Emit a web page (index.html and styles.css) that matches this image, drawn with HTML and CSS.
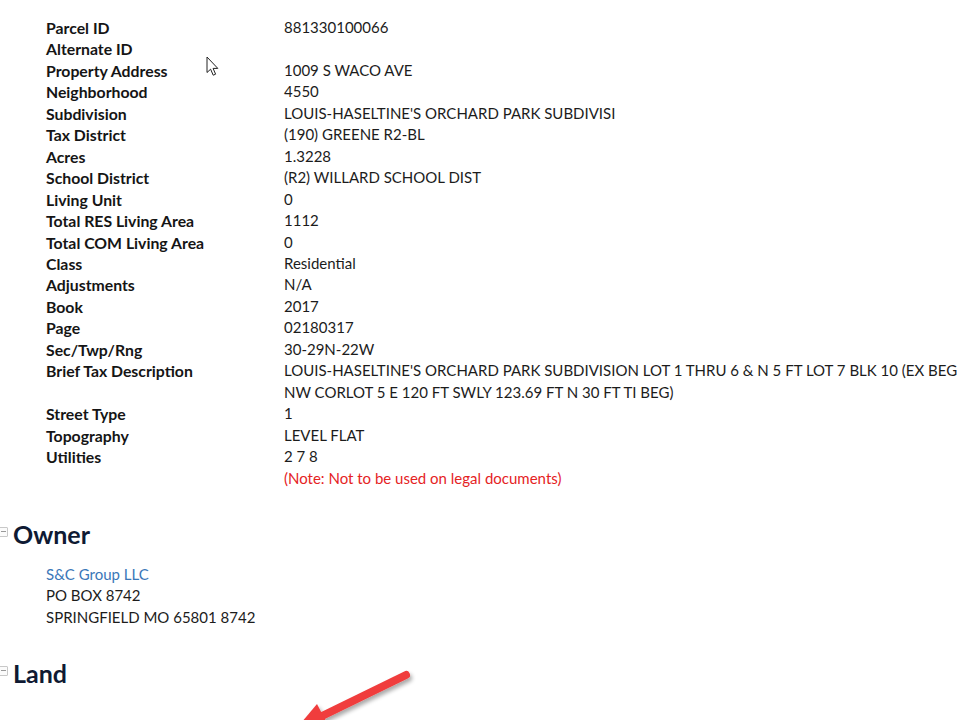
FILE: index.html
```html
<!DOCTYPE html>
<html lang="en">
<head>
<meta charset="utf-8">
<title>Parcel 881330100066</title>
<link rel="stylesheet" href="styles.css">
</head>
<body>
<div class="page">
  <section class="section section-first">
    <h2 class="heading"><span class="toggle"></span>Property</h2>
    <dl class="grid">
      <dt>Parcel ID</dt><dd>881330100066</dd>
      <dt>Alternate ID</dt><dd></dd>
      <dt>Property Address</dt><dd>1009 S WACO AVE</dd>
      <dt>Neighborhood</dt><dd>4550</dd>
      <dt>Subdivision</dt><dd>LOUIS-HASELTINE'S ORCHARD PARK SUBDIVISI</dd>
      <dt>Tax District</dt><dd>(190) GREENE R2-BL</dd>
      <dt>Acres</dt><dd>1.3228</dd>
      <dt>School District</dt><dd>(R2) WILLARD SCHOOL DIST</dd>
      <dt>Living Unit</dt><dd>0</dd>
      <dt>Total RES Living Area</dt><dd>1112</dd>
      <dt>Total COM Living Area</dt><dd>0</dd>
      <dt>Class</dt><dd>Residential</dd>
      <dt>Adjustments</dt><dd>N/A</dd>
      <dt>Book</dt><dd>2017</dd>
      <dt>Page</dt><dd>02180317</dd>
      <dt>Sec/Twp/Rng</dt><dd>30-29N-22W</dd>
      <dt>Brief Tax Description</dt><dd class="nowrap">LOUIS-HASELTINE'S ORCHARD PARK SUBDIVISION LOT 1 THRU 6 &amp; N 5 FT LOT 7 BLK 10 (EX BEG<br>NW CORLOT 5 E 120 FT SWLY 123.69 FT N 30 FT TI BEG)</dd>
      <dt>Street Type</dt><dd>1</dd>
      <dt>Topography</dt><dd>LEVEL FLAT</dd>
      <dt>Utilities</dt><dd>2 7 8</dd>
      <dt></dt><dd class="note">(Note: Not to be used on legal documents)</dd>
    </dl>
  </section>

  <section class="section">
    <h2 class="heading"><span class="toggle"></span>Owner</h2>
    <div class="owner">
      <a class="owner-link" href="#">S&amp;C Group LLC</a>
      <div>PO BOX 8742</div>
      <div>SPRINGFIELD MO 65801 8742</div>
    </div>
  </section>

  <section class="section">
    <h2 class="heading"><span class="toggle"></span>Land</h2>
  </section>
</div>

<svg class="cursor" width="14" height="22" viewBox="0 0 14 22" aria-hidden="true">
  <path d="M1 1 L1 16.5 L4.6 13.2 L7.2 19.2 L9.6 18.2 L7.1 12.4 L11.8 12.4 Z" fill="#fff" stroke="#222" stroke-width="1" stroke-linejoin="round"/>
</svg>

<svg class="annotation" width="160" height="90" viewBox="280 650 160 90" aria-hidden="true">
  <defs>
    <filter id="sh" x="-20%" y="-20%" width="140%" height="140%">
      <feGaussianBlur in="SourceAlpha" stdDeviation="2"/>
      <feOffset dx="2" dy="3" result="b"/>
      <feComponentTransfer><feFuncA type="linear" slope="0.35"/></feComponentTransfer>
      <feMerge><feMergeNode/><feMergeNode in="SourceGraphic"/></feMerge>
    </filter>
  </defs>
  <g filter="url(#sh)">
    <line x1="406" y1="675" x2="322" y2="716" stroke="#f03c3c" stroke-width="8" stroke-linecap="round"/>
    <polygon points="296,729 317,704 329,727" fill="#f03c3c"/>
  </g>
</svg>
</body>
</html>
```

FILE: styles.css
```css
html, body {
  margin: 0;
  padding: 0;
  overflow: hidden;
  background: #ffffff;
}

body {
  width: 960px;
  height: 720px;
  position: relative;
  font-family: Lato, "Open Sans", "Liberation Sans", sans-serif;
  font-size: 15px;
  line-height: 21.45px;
  color: #1c1c1c;
}

.page {
  margin-top: -28px;
}

.section {
  margin: 0 0 32px 0;
}

.heading {
  margin: 0 0 16px 0;
  display: flex;
  align-items: flex-start;
  font-size: 25px;
  line-height: 27px;
  font-weight: 700;
  color: #0f1a33;
}

.section-first .heading {
  margin-bottom: 18px;
}

.toggle {
  position: relative;
  box-sizing: border-box;
  width: 9px;
  height: 10px;
  margin: 6px 5px 0 -1px;
  border: 1px solid #c8c8c8;
  border-radius: 1px;
  background: #fbfbfb;
  flex: none;
}

.toggle::after {
  content: "";
  position: absolute;
  left: 1px;
  right: 1px;
  top: 3px;
  height: 1px;
  background: #999999;
}

.grid {
  margin: 0;
  padding-left: 46px;
  display: grid;
  grid-template-columns: 238px auto;
}

.grid dt {
  font-weight: 700;
  font-size: 15.8px;
  color: #151515;
}

.grid dd {
  margin: 0;
  min-height: 21.45px;
  color: #1c1c1c;
}

.grid .note {
  color: #e5231f;
}

.nowrap {
  white-space: nowrap;
}

.owner {
  padding-left: 46px;
}

.owner-link {
  color: #3a77b8;
  text-decoration: none;
}

.cursor {
  position: absolute;
  left: 206px;
  top: 56px;
}

.annotation {
  position: absolute;
  left: 280px;
  top: 650px;
}
```
